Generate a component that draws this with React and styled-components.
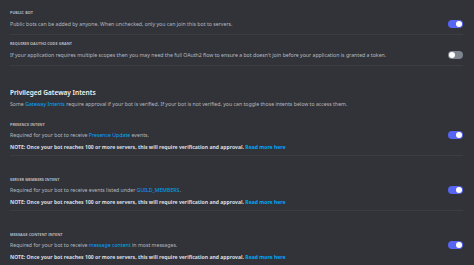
import React from "react";
import styled, { createGlobalStyle } from "styled-components";

const Global = createGlobalStyle`
  html, body { margin: 0; padding: 0; background: #313338; }
  body { font-family: "Noto Sans", "Open Sans", sans-serif; -webkit-font-smoothing: antialiased; }
`;

const Page = styled.div`
  width: 474px;
  min-height: 265px;
  box-sizing: border-box;
  padding: 4px 11px 0 10px;
  background: #313338;
  overflow: hidden;
`;

const SettingRow = styled.div`
  padding: 6px 0 6px;
`;

const Label = styled.div`
  font-size: 3.8px;
  line-height: 6px;
  font-weight: 700;
  text-transform: uppercase;
  color: #b5bac1;
  letter-spacing: 0.05px;
`;

const Line = styled.div`
  display: flex;
  align-items: center;
  justify-content: space-between;
  margin-top: ${(p) => p.$gap}px;
`;

const Desc = styled.div`
  font-size: 5.2px;
  line-height: 8px;
  color: #b5bac1;
`;

const Note = styled.div`
  font-size: 5.1px;
  line-height: 8px;
  font-weight: 700;
  color: #dbdee1;
  margin-top: 4px;
`;

const Link = styled.span`
  color: #00a8fc;
  cursor: pointer;
`;

const Divider = styled.div`
  height: 1px;
  background: #3b3d43;
  margin-bottom: ${(p) => p.$after || 0}px;
`;

const Heading = styled.h2`
  margin: 22px 0 0;
  font-size: 6.5px;
  line-height: 10px;
  font-weight: 600;
  color: #f2f3f5;
`;

const HeadingDesc = styled(Desc)`
  margin-top: 2px;
`;

const IntentRow = styled.div`
  padding: 14px 0 4px;
`;

const Track = styled.div`
  flex: none;
  width: 15px;
  height: 8px;
  border-radius: 4px;
  background: ${(p) => (p.$on ? "#5865f2" : "#80848e")};
  position: relative;
`;

const Knob = styled.div`
  position: absolute;
  top: 1px;
  left: ${(p) => (p.$on ? "8px" : "1px")};
  width: 6px;
  height: 6px;
  border-radius: 50%;
  background: #ffffff;
`;

const Toggle = ({ on }) => (
  <Track $on={on}>
    <Knob $on={on} />
  </Track>
);

const NOTE_TEXT =
  "NOTE: Once your bot reaches 100 or more servers, this will require verification and approval. ";

const intents = [
  {
    label: "Presence Intent",
    desc: (
      <>
        Required for your bot to receive <Link>Presence Update</Link> events.
      </>
    ),
  },
  {
    label: "Server Members Intent",
    desc: (
      <>
        Required for your bot to receive events listed under <Link>GUILD_MEMBERS</Link>.
      </>
    ),
  },
  {
    label: "Message Content Intent",
    desc: (
      <>
        Required for your bot to receive <Link>message content</Link> in most messages.
      </>
    ),
  },
];

export default function App() {
  return (
    <Page>
      <Global />
      <SettingRow>
        <Label>Public Bot</Label>
        <Line $gap={4}>
          <Desc>Public bots can be added by anyone. When unchecked, only you can join this bot to servers.</Desc>
          <Toggle on />
        </Line>
      </SettingRow>
      <Divider />
      <SettingRow>
        <Label>Requires OAuth2 Code Grant</Label>
        <Line $gap={4}>
          <Desc>
            If your application requires multiple scopes then you may need the full OAuth2 flow to ensure a bot
            doesn't join before your application is granted a token.
          </Desc>
          <Toggle on={false} />
        </Line>
      </SettingRow>
      <Divider />
      <Heading>Privileged Gateway Intents</Heading>
      <HeadingDesc>
        Some <Link>Gateway Intents</Link> require approval if your bot is verified. If your bot is not verified,
        you can toggle those intents below to access them.
      </HeadingDesc>
      {intents.map((it, i) => (
        <React.Fragment key={it.label}>
          {i > 0 && <Divider $after={7} />}
          <IntentRow>
            <Label>{it.label}</Label>
            <Line $gap={3}>
              <Desc>{it.desc}</Desc>
              <Toggle on />
            </Line>
            <Note>
              {NOTE_TEXT}
              <Link>Read more here</Link>
            </Note>
          </IntentRow>
        </React.Fragment>
      ))}
    </Page>
  );
}
